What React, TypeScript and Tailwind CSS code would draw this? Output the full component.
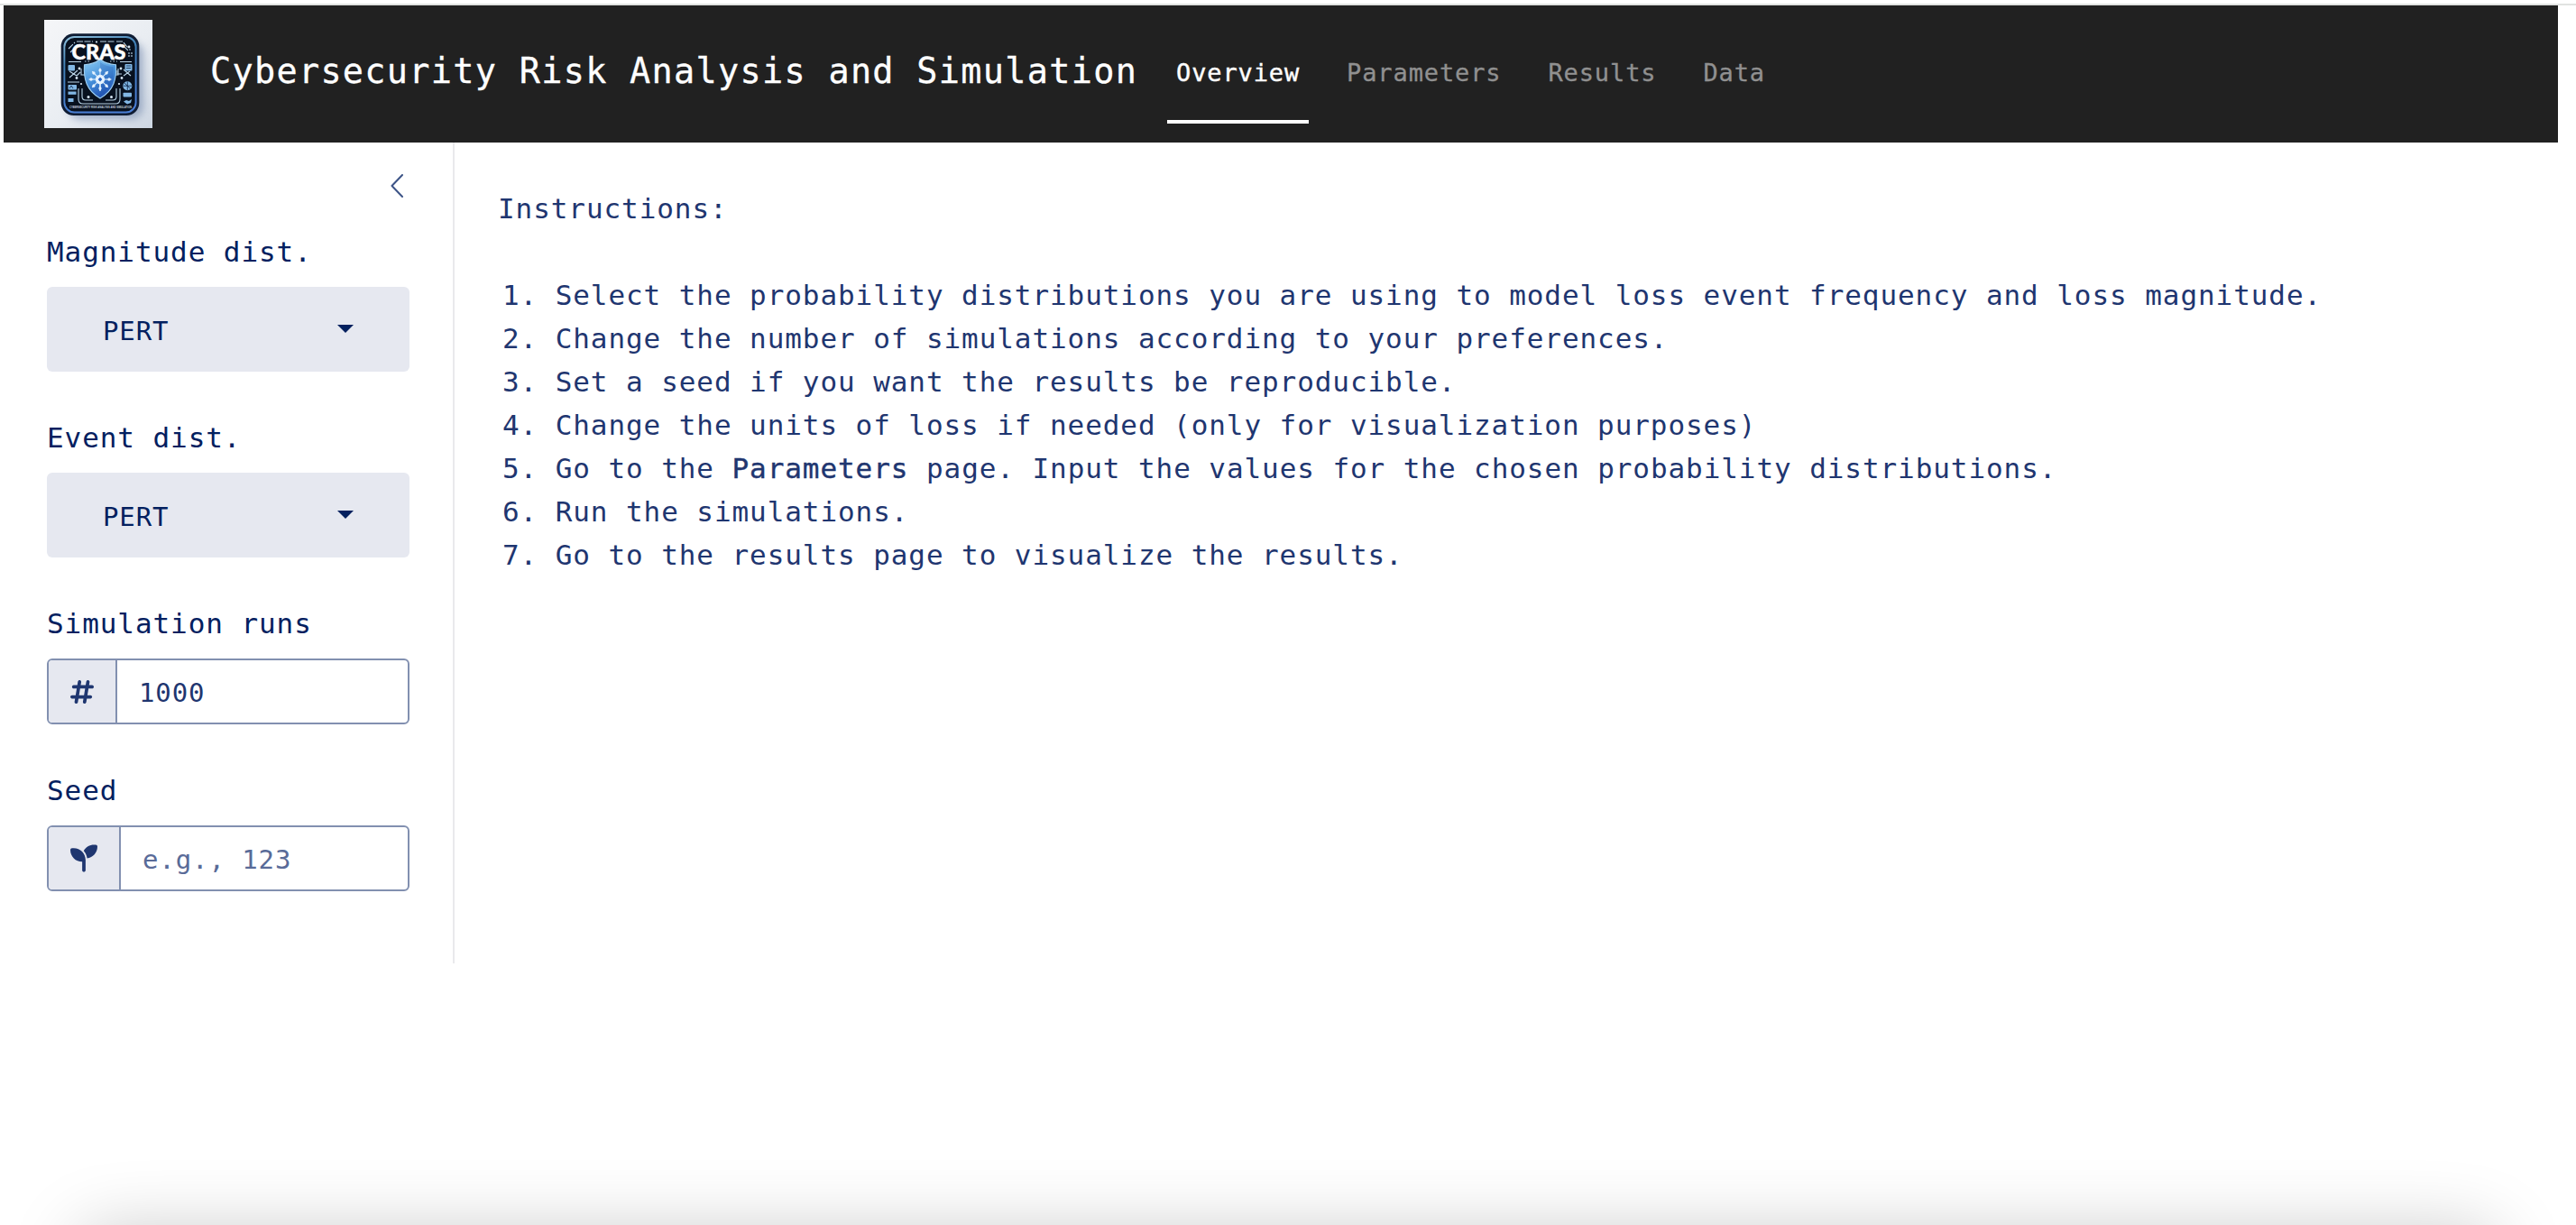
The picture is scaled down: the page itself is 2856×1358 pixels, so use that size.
import React from "react";
import { FaHashtag, FaSeedling } from "react-icons/fa6";

function Logo() {
  const spokes = [0, 45, 90, 135, 180, 225, 270, 315];
  return (
    <svg viewBox="0 0 120 120" className="block h-[120px] w-[120px] shrink-0">
      <defs>
        <linearGradient id="paper" x1="0" y1="0" x2="1" y2="1">
          <stop offset="0" stopColor="#f5f6f8" />
          <stop offset="0.55" stopColor="#e9edf2" />
          <stop offset="1" stopColor="#cdd6e2" />
        </linearGradient>
        <linearGradient id="rim" x1="0" y1="0" x2="0.3" y2="1">
          <stop offset="0" stopColor="#8fc0dc" />
          <stop offset="0.35" stopColor="#3f7fb5" />
          <stop offset="1" stopColor="#4a7fd6" />
        </linearGradient>
        <linearGradient id="shield" x1="0.2" y1="0" x2="0.6" y2="1">
          <stop offset="0" stopColor="#86c8f2" />
          <stop offset="0.5" stopColor="#4690da" />
          <stop offset="1" stopColor="#1d4db0" />
        </linearGradient>
        <filter id="soft" x="-30%" y="-30%" width="160%" height="160%">
          <feGaussianBlur stdDeviation="4" />
        </filter>
      </defs>
      <rect width="120" height="120" fill="url(#paper)" />
      <rect x="26" y="24" width="84" height="86" rx="14" fill="#7f93b4" opacity="0.65" filter="url(#soft)" />
      <rect x="18.7" y="15.3" width="86.6" height="90.7" rx="14" fill="#0f1c33" />
      <rect x="22.4" y="19" width="79.2" height="83.5" rx="11" fill="#08111f" stroke="url(#rim)" strokeWidth="1.9" />
      <g fill="none" stroke="#b9d3e6" strokeWidth="1.1">
        <path d="M27 32l7-7M29 36l5-5M36 24h18M62 24h16M80 24h7l5 6h3M88 29l5 5" strokeDasharray="7 1.5" />
        <path d="M27 46.500h14M84 46.500h13M26 69h13M86 60h-5v-4" />
        <path d="M38 76v12q0 5 5 5h27M42 76v9q0 4 4 4h8M84 76v12q0 5-5 5h-9M80 76v9q0 4-4 4h-8" />
        <path d="M28 57l8 5M36 62l4-4M28 64l9-8M88 55l8 7M88 62l7-5M41 54v7h4M82 54v7h-3" />
        <path d="M94 36v5M97 36v5M94 33h3" strokeDasharray="2 1" />
        <path d="M45 46h6M73 46h8" strokeDasharray="1.5 2" />
      </g>
      <g fill="#82b7e4">
        <rect x="26.5" y="50" width="7.5" height="6.5" rx="1" />
        <rect x="89.5" y="49" width="8" height="7.5" rx="1" />
        <rect x="26.5" y="72" width="9.5" height="5.5" rx="0.8" />
        <rect x="26.5" y="79.5" width="9" height="3.3" />
        <rect x="26.5" y="87" width="6" height="4" />
        <circle cx="92.3" cy="73.2" r="5" />
        <rect x="87.5" y="80.8" width="9.5" height="4.6" rx="0.8" />
        <path d="M88 90.5l3-1.5 3 1 3-2-1 4-4 1.5z" />
      </g>
      <path d="M92.3 68.5v9.4M87.6 73.2h9.4M89 70l6.6 6.4M28 76l2-3 2 3M91 51h5M91 53.5h5" stroke="#0b2448" strokeWidth="0.8" fill="none" />
      <g fill="#d7e6f3">
        <circle cx="39" cy="54" r="1.4" />
        <circle cx="36" cy="64.5" r="1.4" />
        <circle cx="85" cy="54" r="1.4" />
        <circle cx="86" cy="64.5" r="1.4" />
        <circle cx="94" cy="30" r="1.4" />
        <circle cx="58" cy="24.5" r="1.1" />
        <circle cx="49" cy="85.5" r="1.5" />
        <circle cx="74.5" cy="85.5" r="1.5" />
        <circle cx="41" cy="71" r="1.1" />
        <circle cx="83" cy="71" r="1.1" />
      </g>
      <path
        d="M62 43.5c5 4.5 11 6 17.5 6.3 1 15-2 28.5-17.5 37.2C46.5 78.3 43.5 64.8 44.5 49.8 51 49.5 57 48 62 43.5z"
        fill="url(#shield)"
        stroke="#9fd0f2"
        strokeWidth="1.1"
      />
      <path d="M62 47c4.5 3.5 9.5 5 14.8 5.3.5 12.5-2.5 24-14.8 31.200z" fill="#1a4aa8" opacity="0.25" />
      <g stroke="#e8f4ff" strokeWidth="1.1" fill="#e8f4ff">
        {spokes.map((a) => (
          <g key={a} transform={`rotate(${a} 62 66)`}>
            <path d="M62 62v-8.500" />
            <circle cx="62" cy="56" r="1.1" />
          </g>
        ))}
        <path d="M62 71v8" />
        <circle cx="62" cy="66" r="4.6" />
      </g>
      <path d="M62 63.5l2.3 2.5-2.3 2.5-2.3-2.5z" fill="#2563c4" />
      <text x="30.5" y="43.5" textLength="60" lengthAdjust="spacingAndGlyphs" fontFamily="Lato" fontWeight="900" fontSize="22.5" fill="#ffffff" stroke="#ffffff" strokeWidth="0.5">
        CRAS
      </text>
      <text x="28" y="98.3" textLength="69" lengthAdjust="spacingAndGlyphs" fontFamily="Liberation Sans" fontWeight="700" fontSize="3.6" fill="#c3cede">
        CYBERSECURITY RISK ANALYSIS AND SIMULATION
      </text>
    </svg>
  );
}

function Label({ children }: { children: React.ReactNode }) {
  return <div className="h-12 text-[31px] leading-[48px] tracking-[0.92px] text-[#03205f]">{children}</div>;
}

function Select({ label, value }: { label: string; value: string }) {
  return (
    <div>
      <Label>{label}</Label>
      <button className="mt-[15px] flex h-[94px] w-full items-center justify-between rounded-[6px] bg-[#e6e8f0] pr-[62px] pl-[62px] text-[29px] leading-[48px] tracking-[0.9px] text-[#03205f]">
        <span className="pt-[3px]">{value}</span>
        <svg viewBox="0 0 18 9" className="mb-0.5 h-[9px] w-[18px]">
          <path d="M0 0h18L9 9z" fill="#03205f" />
        </svg>
      </button>
    </div>
  );
}

function NumberField({
  label,
  icon,
  value,
  placeholder,
}: {
  label: string;
  icon: React.ReactNode;
  value?: string;
  placeholder?: string;
}) {
  return (
    <div>
      <Label>{label}</Label>
      <div className="mt-[15px] flex h-[73px] overflow-hidden rounded-[6px] border-2 border-[#8290b0]">
        <div className="flex shrink-0 items-center border-r-2 border-[#8290b0] bg-[#e6e8f0] px-6 text-[#1f3670]">{icon}</div>
        <input
          className="h-full min-w-0 flex-1 bg-transparent pt-[3px] pl-6 text-[29px] tracking-[0.9px] text-[#1f3670] outline-none placeholder:text-[#596b98] placeholder:opacity-100"
          defaultValue={value}
          placeholder={placeholder}
        />
      </div>
    </div>
  );
}

const tabs = ["Overview", "Parameters", "Results", "Data"];

const steps: React.ReactNode[] = [
  "Select the probability distributions you are using to model loss event frequency and loss magnitude.",
  "Change the number of simulations according to your preferences.",
  "Set a seed if you want the results be reproducible.",
  "Change the units of loss if needed (only for visualization purposes)",
  <>
    Go to the <span className="[-webkit-text-stroke:0.4px_#1f3670]">Parameters</span> page. Input the values for the chosen
    probability distributions.
  </>,
  "Run the simulations.",
  "Go to the results page to visualize the results.",
];

export default function App() {
  return (
    <div className="relative h-[1358px] w-[2856px] overflow-hidden bg-white pt-1 font-['DejaVu_Sans_Mono',monospace]">
      <div className="h-0.5 bg-[#e1e3e1]" />
      <header className="mr-5 ml-1 flex h-[152px] bg-[#212121] pt-4 pl-[45px]">
        <Logo />
        <h1 className="ml-16 w-[1028px] pt-[27px] text-[38.5px] leading-[60px] tracking-[1.3px] whitespace-nowrap text-white [-webkit-text-stroke:0.3px_#fff]">
          Cybersecurity Risk Analysis and Simulation
        </h1>
        <nav className="ml-[33px] flex gap-8">
          {tabs.map((tab, i) => (
            <a
              key={tab}
              className={
                i === 0
                  ? "h-[115px] border-b-4 border-white px-2.5 pt-[38px] text-[27px] leading-[42px] tracking-[0.88px] text-white [-webkit-text-stroke:0.4px_#fff]"
                  : "h-[115px] px-2.5 pt-[38px] text-[27px] leading-[42px] tracking-[0.88px] text-[#909090] [-webkit-text-stroke:0.3px_#909090]"
              }
            >
              {tab}
            </a>
          ))}
        </nav>
      </header>
      <div className="flex h-[910px]">
        <aside className="w-[504px] shrink-0 border-r-2 border-[#e9e9ec] pr-12 pl-[52px]">
          <div className="flex justify-end pt-[35px] pr-[7px]">
            <svg viewBox="0 0 14 26" className="h-[26px] w-[14px]">
              <path d="M13 1L1.500 13 13 25" fill="none" stroke="#3d5487" strokeWidth="2" strokeLinecap="round" strokeLinejoin="round" />
            </svg>
          </div>
          <div className="mt-9 flex flex-col gap-[49px]">
            <Select label="Magnitude dist." value="PERT" />
            <Select label="Event dist." value="PERT" />
            <NumberField label="Simulation runs" value="1000" icon={<FaHashtag className="h-[30px] w-[26px]" />} />
            <NumberField label="Seed" placeholder="e.g., 123" icon={<FaSeedling className="h-[31px] w-[30px]" />} />
          </div>
        </aside>
        <main className="flex-1 pt-[49px] pl-12 text-[31px] leading-[48px] tracking-[0.92px] text-[#1f3670]">
          <p>Instructions:</p>
          <ol className="mt-12 ml-[5px]">
            {steps.map((step, i) => (
              <li key={i} className="flex whitespace-nowrap">
                <span className="w-[58.7px] shrink-0">{i + 1}.</span>
                <span>{step}</span>
              </li>
            ))}
          </ol>
        </main>
      </div>
      <div className="absolute top-[1366px] right-[90px] left-[90px] h-[200px] rounded-[20px] shadow-[0_0_80px_0_rgba(0,0,0,0.22)]" />
    </div>
  );
}
